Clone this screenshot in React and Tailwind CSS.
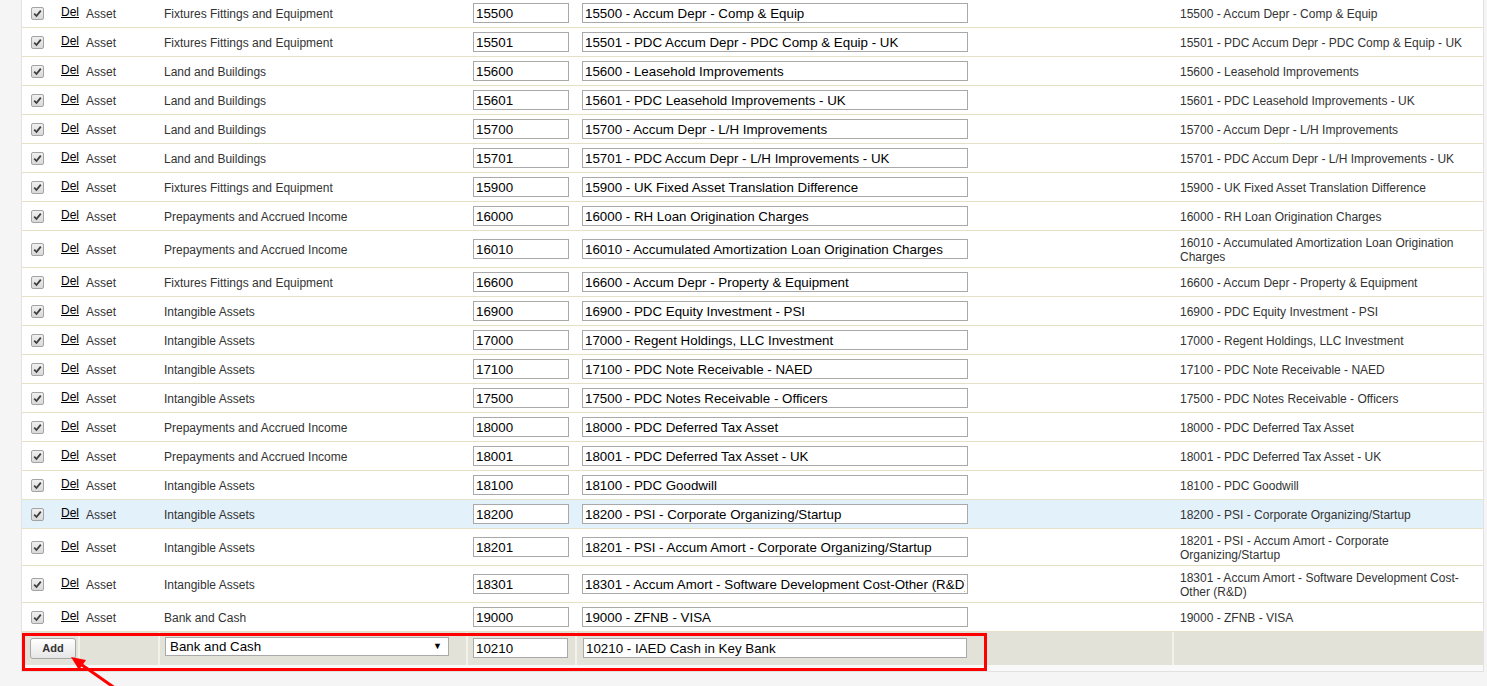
import React from "react";

const rows = [
  ["Fixtures Fittings and Equipment", "15500", "15500 - Accum Depr - Comp & Equip"],
  ["Fixtures Fittings and Equipment", "15501", "15501 - PDC Accum Depr - PDC Comp & Equip - UK"],
  ["Land and Buildings", "15600", "15600 - Leasehold Improvements"],
  ["Land and Buildings", "15601", "15601 - PDC Leasehold Improvements - UK"],
  ["Land and Buildings", "15700", "15700 - Accum Depr - L/H Improvements"],
  ["Land and Buildings", "15701", "15701 - PDC Accum Depr - L/H Improvements - UK"],
  ["Fixtures Fittings and Equipment", "15900", "15900 - UK Fixed Asset Translation Difference"],
  ["Prepayments and Accrued Income", "16000", "16000 - RH Loan Origination Charges"],
  ["Prepayments and Accrued Income", "16010", "16010 - Accumulated Amortization Loan Origination Charges"],
  ["Fixtures Fittings and Equipment", "16600", "16600 - Accum Depr - Property & Equipment"],
  ["Intangible Assets", "16900", "16900 - PDC Equity Investment - PSI"],
  ["Intangible Assets", "17000", "17000 - Regent Holdings, LLC Investment"],
  ["Intangible Assets", "17100", "17100 - PDC Note Receivable - NAED"],
  ["Intangible Assets", "17500", "17500 - PDC Notes Receivable - Officers"],
  ["Prepayments and Accrued Income", "18000", "18000 - PDC Deferred Tax Asset"],
  ["Prepayments and Accrued Income", "18001", "18001 - PDC Deferred Tax Asset - UK"],
  ["Intangible Assets", "18100", "18100 - PDC Goodwill"],
  ["Intangible Assets", "18200", "18200 - PSI - Corporate Organizing/Startup"],
  ["Intangible Assets", "18201", "18201 - PSI - Accum Amort - Corporate Organizing/Startup"],
  ["Intangible Assets", "18301", "18301 - Accum Amort - Software Development Cost-Other (R&D)"],
  ["Bank and Cash", "19000", "19000 - ZFNB - VISA"],
];

function CheckBox() {
  return (
    <span className="flex items-center justify-center w-[13px] h-[13px] rounded-[2px] border border-[#a3a3a3] bg-gradient-to-b from-[#f0f0f0] to-[#d9d9d9]">
      <svg width="9" height="9" viewBox="0 0 9 9">
        <path d="M1.2 4.6 L3.5 7 L7.8 1.6" fill="none" stroke="#3d3d3d" strokeWidth="1.8" />
      </svg>
    </span>
  );
}

function Field({ value, w }) {
  return (
    <input
      readOnly
      value={value}
      className={`block ${w} h-[20px] border border-[#a9a9a9] bg-white px-[2px] text-[13.33px] text-black outline-none font-['Liberation_Sans',Arial,sans-serif]`}
    />
  );
}

function Row({ cat, acct, desc, highlight }) {
  return (
    <div
      className={`flex items-center min-h-[28px] py-1 border-b border-[#e5e1c5] text-[12px] leading-[14px] text-[#333] ${
        highlight ? "bg-[#e3f1fb]" : "bg-white"
      }`}
    >
      <div className="w-[33px] pl-[9px] shrink-0">
        <CheckBox />
      </div>
      <div className="w-[25px] pl-[6px] shrink-0">
        <a className="text-black underline -translate-y-[1px] inline-block cursor-pointer">Del</a>
      </div>
      <div className="w-[80px] pl-[6px] translate-y-px shrink-0">Asset</div>
      <div className="w-[308px] pl-[4px] translate-y-px shrink-0">{cat}</div>
      <div className="w-[109px] pl-[5px] shrink-0">
        <Field value={acct} w="w-[96px]" />
      </div>
      <div className="w-[597px] pl-[5px] shrink-0">
        <Field value={desc} w="w-[386px]" />
      </div>
      <div className="w-[309px] pl-[6px] pr-3 translate-y-px shrink-0">{desc}</div>
    </div>
  );
}

export default function App() {
  return (
    <div className="relative w-[1487px] h-[686px] overflow-hidden bg-[#f5f5f5] font-['Liberation_Sans',Arial,sans-serif]">
      <div className="ml-[21px] w-[1463px] -mt-px border-l border-r border-[#e2e2e2] bg-[#f9f9f9] border-b pb-[6px]">
        {rows.map((r) => (
          <Row key={r[1]} cat={r[0]} acct={r[1]} desc={r[2]} highlight={r[1] === "18200"} />
        ))}

        <div className="flex h-[33px] bg-[#e3e2d8]">
          <div className="flex items-start w-[58px] pl-[8px] pt-[6px] border-r-2 border-[#f2f1ec] shrink-0">
            <button className="w-[46px] h-[21px] rounded-[3px] border border-[#a8a8a8] bg-gradient-to-b from-white to-[#e6e6e6] text-[11px] font-bold text-[#333]">
              Add
            </button>
          </div>
          <div className="w-[80px] border-r-2 border-[#f2f1ec] shrink-0" />
          <div className="flex items-start w-[308px] pl-[5px] pt-[5px] border-r-2 border-[#f2f1ec] shrink-0">
            <div className="flex items-center justify-between w-[284px] h-[19px] border border-[#a9a9a9] bg-white pl-[4px] pr-[6px] text-[13.33px] text-black">
              <span>Bank and Cash</span>
              <span className="text-[9px]">▼</span>
            </div>
          </div>
          <div className="flex items-start w-[109px] pl-[5px] pt-[6px] border-r-2 border-[#f2f1ec] shrink-0">
            <Field value="10210" w="w-[95px]" />
          </div>
          <div className="flex items-start w-[597px] pl-[6px] pt-[6px] border-r-2 border-[#f2f1ec] shrink-0">
            <Field value="10210 - IAED Cash in Key Bank" w="w-[384px]" />
          </div>
          <div className="w-[309px] shrink-0" />
        </div>
      </div>

      <div className="absolute left-[22px] top-[633px] w-[965px] h-[38px] border-[3px] border-[#ff0000] pointer-events-none" />

      <svg className="absolute inset-0 pointer-events-none" width="1487" height="686">
        <line x1="122" y1="693" x2="82" y2="665" stroke="#ff0000" strokeWidth="3" />
        <polygon points="71,657 86,660 79,670" fill="#ff0000" />
      </svg>
    </div>
  );
}
